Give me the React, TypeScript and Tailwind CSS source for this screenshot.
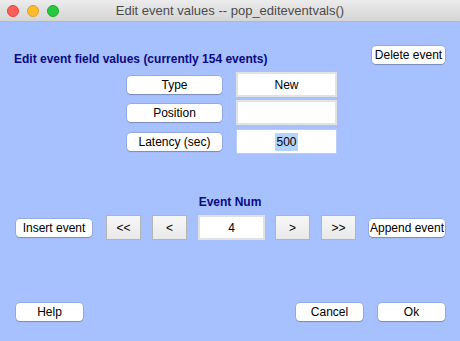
import React from "react";

const btn =
  "h-[18px] bg-white rounded-[4px] flex items-center justify-center text-[12px] leading-[14px] text-black shadow-[0_0_0_0.5px_rgba(0,0,0,0.22),0_1px_1px_rgba(0,0,0,0.18)]";
const navBtn =
  "h-[25px] w-[35px] bg-gradient-to-b from-[#f7f7f7] to-[#e9e9e9] border border-[#b4b4b4] flex items-center justify-center text-[12px] text-black";

export default function App() {
  return (
    <div className="w-[460px] h-[341px] flex flex-col font-['Liberation_Sans',Arial,sans-serif] overflow-hidden">
      <div className="h-[22px] relative flex items-center justify-center bg-gradient-to-b from-[#ececec] to-[#d5d5d5] border-b border-[#b8b8b8]">
        <div className="absolute left-[7px] top-[5px] flex gap-[8px]">
          <div className="w-[12px] h-[12px] rounded-full bg-[#fc5f57] border border-[#e0443e]" />
          <div className="w-[12px] h-[12px] rounded-full bg-[#fdbc2e] border border-[#dea123]" />
          <div className="w-[12px] h-[12px] rounded-full bg-[#28c840] border border-[#1aab29]" />
        </div>
        <span className="text-[13px] text-[#4b4b4b] leading-none ml-[0px]">Edit event values -- pop_editeventvals()</span>
      </div>
      <div className="flex-1 bg-[#a7c0fe] flex flex-col">
        <div className="mt-[24px] h-[20px] flex items-start justify-between">
          <div className="ml-[14px] mt-[6px] text-[12px] leading-[14px] font-bold text-[#0a0a7e]">
            Edit event field values (currently 154 events)
          </div>
          <div className={`${btn} w-[73px] mr-[15px]`}>Delete event</div>
        </div>
        <div className="mt-[6px] ml-[127px] flex flex-col">
          <div className="h-[25px] flex items-center">
            <div className={`${btn} w-[95px]`}>Type</div>
            <div className="ml-[14px] w-[101px] h-[25px] bg-white border-2 border-[#e2e2e2] flex items-center justify-center text-[12px]">New</div>
          </div>
          <div className="mt-[3px] h-[25px] flex items-center">
            <div className={`${btn} w-[95px]`}>Position</div>
            <div className="ml-[14px] w-[101px] h-[25px] bg-white border-2 border-[#e2e2e2]" />
          </div>
          <div className="mt-[4px] h-[25px] flex items-center">
            <div className={`${btn} w-[95px]`}>Latency (sec)</div>
            <div className="ml-[14px] w-[101px] h-[25px] bg-white border border-[#b9cbf7] flex items-center justify-center text-[12px]">
              <span className="bg-[#b3d4fd] px-[1px]">500</span>
            </div>
          </div>
        </div>
        <div className="mt-[41px] text-center text-[12px] leading-[14px] font-bold text-[#0a0a7e]">Event Num</div>
        <div className="mt-[6px] h-[25px] flex items-center">
          <div className={`${btn} w-[76px] ml-[16px]`}>Insert event</div>
          <div className={`${navBtn} ml-[14px]`}>&lt;&lt;</div>
          <div className={`${navBtn} ml-[11px]`}>&lt;</div>
          <div className="ml-[11px] w-[67px] h-[25px] bg-white border-2 border-[#e2e2e2] flex items-center justify-center text-[12px]">4</div>
          <div className={`${navBtn} ml-[10px]`}>&gt;</div>
          <div className={`${navBtn} ml-[11px]`}>&gt;&gt;</div>
          <div className={`${btn} w-[76px] ml-[13px]`}>Append event</div>
        </div>
        <div className="flex-1" />
        <div className="mb-[20px] h-[18px] flex items-center">
          <div className={`${btn} w-[67px] ml-[16px]`}>Help</div>
          <div className="flex-1" />
          <div className={`${btn} w-[67px]`}>Cancel</div>
          <div className={`${btn} w-[67px] ml-[15px] mr-[15px]`}>Ok</div>
        </div>
      </div>
    </div>
  );
}
